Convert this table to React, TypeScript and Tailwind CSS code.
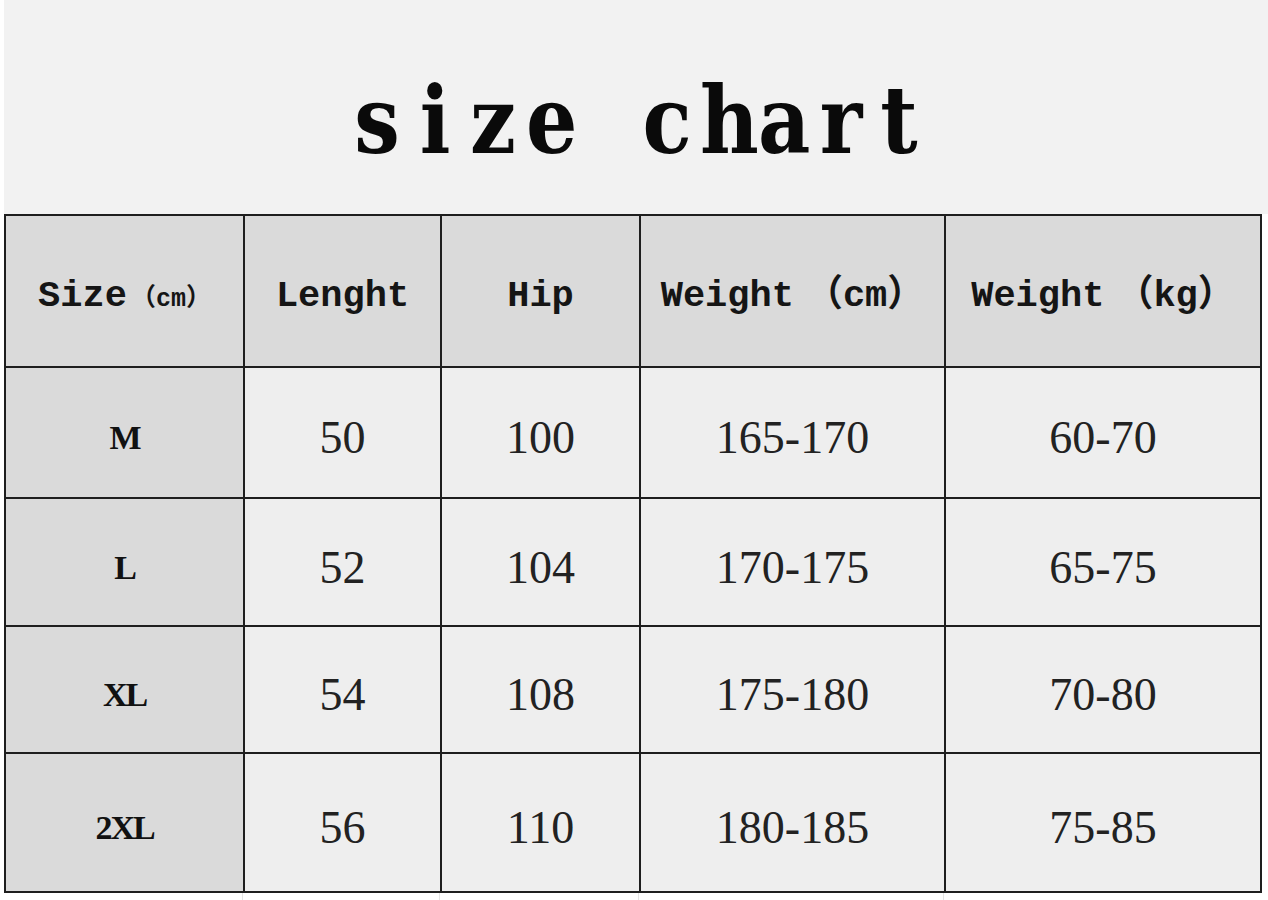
const header = ["Size", "Lenght", "Hip", "Weight（cm）", "Weight（kg）"];

const rows = [
  { size: "M", len: "50", hip: "100", h: "165-170", w: "60-70" },
  { size: "L", len: "52", hip: "104", h: "170-175", w: "65-75" },
  { size: "XL", len: "54", hip: "108", h: "175-180", w: "70-80" },
  { size: "2XL", len: "56", hip: "110", h: "180-185", w: "75-85" },
];

const rowHeights = ["h-[129px]", "h-[126px]", "h-[125px]", "h-[137px]"];

const mono = { fontFamily: '"Liberation Mono", "Noto Sans CJK SC", monospace' };
const serif = { fontFamily: '"Liberation Serif", "Noto Serif", serif' };
const slab = { fontFamily: '"DejaVu Serif", "Liberation Serif", serif' };

export default function App() {
  return (
    <div className="w-[1268px] h-[900px] bg-white overflow-hidden">
      <div className="ml-[4px] h-[214px] bg-[#f2f2f2] flex items-center justify-center">
        <h1
          className="flex text-[94px] font-bold text-[#0a0a0a] leading-none mt-[26px] ml-[4px]"
          style={slab}
        >
          {"size chart".split("").map((ch, i) => (
            <span key={i} className="inline-block w-[58px] text-center scale-x-[0.86]">
              {ch === " " ? "\u00a0" : ch}
            </span>
          ))}
        </h1>
      </div>

      <div className="ml-[4px] w-[1258px] bg-[#1e1e1e] p-[2px] grid grid-cols-[237px_195px_197px_303px_314px] gap-[2px]">
        {header.map((label, i) => (
          <div
            key={label}
            className="h-[150px] bg-[#dadada] flex items-center justify-center pt-[12px] font-bold text-[#151515] text-[37px]"
            style={mono}
          >
            {i === 0 ? (
              <span className="flex items-baseline">
                Size
                <span className="text-[25px] ml-[4px]">（cm）</span>
              </span>
            ) : i >= 3 ? (
              <span>
                {label.split("（")[0]}
                <span className="ml-[12px]">（{label.split("（")[1]}</span>
              </span>
            ) : (
              label
            )}
          </div>
        ))}

        {rows.map((r, ri) => (
          <Row key={r.size} r={r} hClass={rowHeights[ri]} />
        ))}
      </div>

      <div className="ml-[4px] w-[1258px] h-[8px] grid grid-cols-[239px_197px_199px_305px_318px]">
        <div className="border-r border-[#e4e4e4]" />
        <div className="border-r border-[#e4e4e4]" />
        <div className="border-r border-[#e4e4e4]" />
        <div className="border-r border-[#e4e4e4]" />
        <div />
      </div>
    </div>
  );
}

function Row({ r, hClass }: { r: (typeof rows)[number]; hClass: string }) {
  const cell = `${hClass} bg-[#eeeeee] flex items-center justify-center pt-[10px] text-[46px] text-[#222]`;
  return (
    <>
      <div
        className={`${hClass} bg-[#dadada] flex items-center justify-center pt-[10px] text-[34px] font-bold text-[#111] tracking-[-2px]`}
        style={serif}
      >
        {r.size}
      </div>
      <div className={cell} style={serif}>
        {r.len}
      </div>
      <div className={cell} style={serif}>
        {r.hip}
      </div>
      <div className={cell} style={serif}>
        {r.h}
      </div>
      <div className={cell} style={serif}>
        {r.w}
      </div>
    </>
  );
}
